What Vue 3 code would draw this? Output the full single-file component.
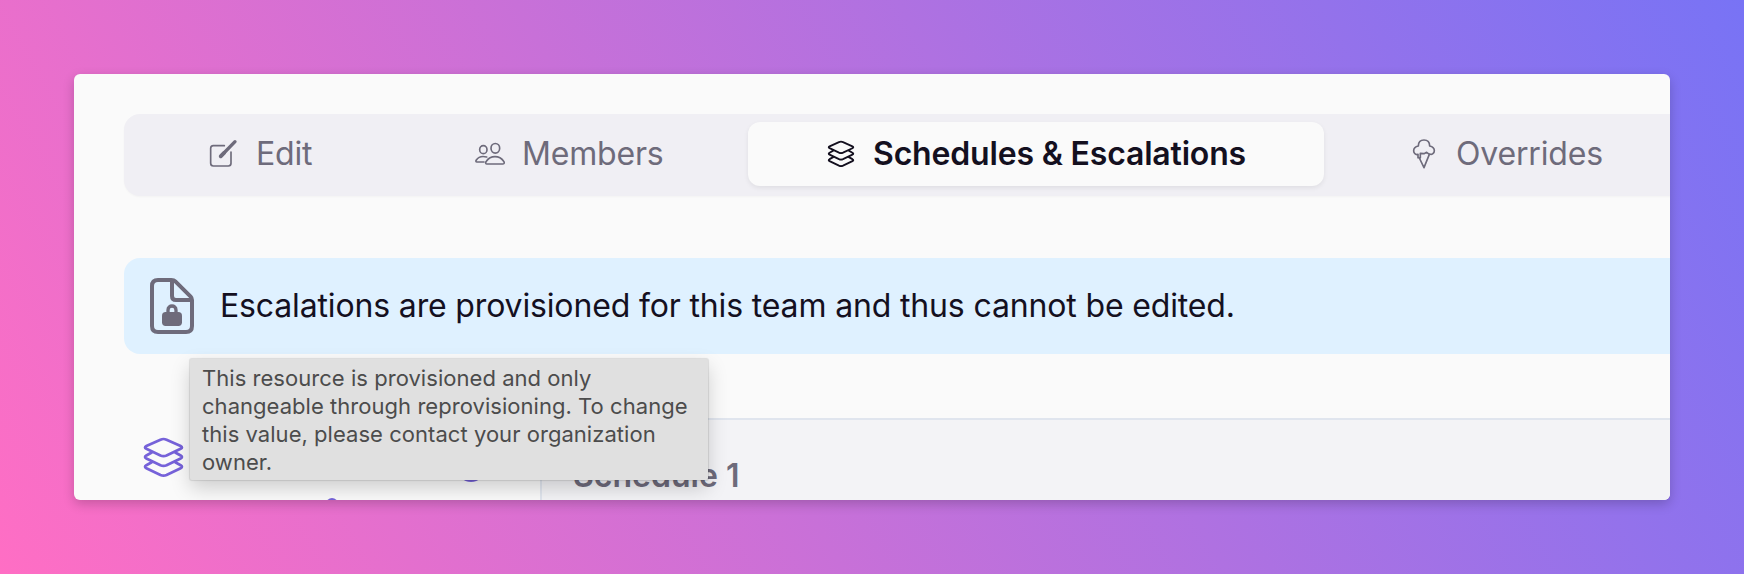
<script setup>
import { ref } from 'vue'

const tabs = [
    { id: 'edit', label: 'Edit' },
    { id: 'members', label: 'Members' },
    { id: 'schedules', label: 'Schedules & Escalations' },
    { id: 'overrides', label: 'Overrides' },
]

const activeTab = ref('schedules')
</script>

<template>
    <div class="backdrop">
        <main class="window">
            <nav class="tabs">
                <button
                    v-for="tab in tabs"
                    :key="tab.id"
                    class="tab"
                    :class="[tab.id, { active: tab.id === activeTab }]"
                    @click="activeTab = tab.id"
                >
                    <svg v-if="tab.id === 'edit'" class="tab-icon" viewBox="27 24 96 96">
                        <path d="M76 47H43Q35 47 35 55V100Q35 108 43 108H88Q96 108 96 100V66" />
                        <path d="M66 78L108 35" stroke-width="10" />
                        <path d="M65 79L76 68" stroke-width="11" />
                    </svg>
                    <svg v-else-if="tab.id === 'members'" class="tab-icon" viewBox="102 114 96 96">
                        <ellipse cx="166" cy="145" rx="13" ry="14.5" />
                        <ellipse cx="130" cy="149" rx="11" ry="12" />
                        <path d="M140 192C136 192 136 187 139 184C145 175 154 170 165 170C176 170 185 175 191 184C194 188 193 192 189 192Z" />
                        <path d="M132 186H111C107 186 107 183 109 180C115 171 125 167 140 171" />
                    </svg>
                    <svg v-else-if="tab.id === 'schedules'" class="tab-icon" viewBox="-13.5 -13.5 143 143">
                        <path d="M7 24L49 5Q58 1 67 5L109 24Q117 28 109 32L67 52Q58 56 49 52L7 32Q-1 28 7 24Z" stroke-width="8" />
                        <path d="M23 43L7 52Q-1 57 7 61L49 81Q58 85 67 81L109 61Q117 57 109 52L93 43" stroke-width="8" />
                        <path d="M23 72L7 81Q-1 86 7 90L49 110Q58 114 67 110L109 90Q117 86 109 81L93 72" stroke-width="8" />
                    </svg>
                    <svg v-else class="tab-icon" viewBox="39 24 96 96">
                        <path d="M72 83H69V73C60 76 56 67 56 62C56 55 61 50 70 48C70 37 76 30 87 30C98 30 104 37 104 48C113 50 118 55 118 62C118 69 111 75 104 72" />
                        <path d="M76 83V70L87 71L95 67L103 73L87 113L73 84" />
                    </svg>
                    <span>{{ tab.label }}</span>
                </button>
            </nav>

            <section class="notice">
                <svg class="lock-icon" viewBox="0 0 132 168">
                    <path d="M64 6H24Q6 6 6 24V144Q6 162 24 162H108Q126 162 126 144V66Q126 60 122 56L76 10Q72 6 64 6Z" />
                    <path d="M66 7V54Q66 66 78 66H125" />
                    <path d="M54 108V96C54 80 78 80 78 96V108" stroke-width="10" />
                    <rect class="lock-body" x="36" y="102" width="60" height="42" rx="11" />
                </svg>
                <span class="notice-text">Escalations are provisioned for this team and thus cannot be edited.</span>
                <div class="tooltip" role="tooltip">
                    This resource is provisioned and only<br>
                    changeable through reprovisioning. To change<br>
                    this value, please contact your organization<br>
                    owner.
                </div>
            </section>

            <section class="content">
                <aside class="sidebar">
                    <svg class="layers-icon" viewBox="0 0 116 116">
                        <path d="M7 24L49 5Q58 1 67 5L109 24Q117 28 109 32L67 52Q58 56 49 52L7 32Q-1 28 7 24Z" />
                        <path d="M23 43L7 52Q-1 57 7 61L49 81Q58 85 67 81L109 61Q117 57 109 52L93 43" />
                        <path d="M23 72L7 81Q-1 86 7 90L49 110Q58 114 67 110L109 90Q117 86 109 81L93 72" />
                    </svg>
                    <span class="add-dot"></span>
                    <span class="node-dot"></span>
                </aside>
                <div class="schedule">
                    <h2>Schedule 1</h2>
                </div>
            </section>
        </main>
    </div>
</template>

<style>
body {
    margin: 0;
    overflow: hidden;
}
</style>

<style scoped>
    .backdrop {
        box-sizing: border-box;
        width: 1744px;
        height: 574px;
        padding: 74px;
        background: linear-gradient(60deg, #ff6ec4, #7873f5);
        font-family: Inter, "Liberation Sans", sans-serif;
    }
    .window {
        box-sizing: border-box;
        height: 426px;
        padding: 40px 0 0 50px;
        overflow: hidden;
        border-radius: 6px;
        background: #fafafa;
        box-shadow: 0 4px 12px rgba(0, 0, 0, 0.2);
    }
    .tabs {
        display: flex;
        gap: 8px;
        box-sizing: border-box;
        width: 1640px;
        height: 82px;
        padding: 8px 8px 8px 7px;
        border-radius: 16px;
        background: #f0eff4;
        box-shadow: 0 1px 2px rgba(0, 0, 0, 0.03);
    }
    .tab {
        display: flex;
        flex: none;
        align-items: center;
        box-sizing: border-box;
        height: 64px;
        padding: 0 0 0 77px;
        gap: 16px;
        border: none;
        border-radius: 12px;
        background: transparent;
        color: #6e6b7b;
        font: 400 32px/40px Inter, "Liberation Sans", sans-serif;
        letter-spacing: -0.18px;
        white-space: nowrap;
        cursor: pointer;
    }
    .edit {
        width: 259px;
    }
    .members {
        width: 342px;
        padding-left: 76px;
    }
    .schedules {
        width: 576px;
    }
    .overrides {
        width: 360px;
        padding-left: 76px;
    }
    .tab.active {
        background: #fafafa;
        color: #14101f;
        font-weight: 600;
        box-shadow: 0 2px 5px rgba(0, 0, 0, 0.07);
    }
    .tab-icon {
        flex: none;
        width: 32px;
        height: 32px;
        fill: none;
        stroke: currentColor;
        stroke-width: 5;
        stroke-linecap: round;
        stroke-linejoin: round;
    }
    .notice {
        position: relative;
        display: flex;
        align-items: center;
        box-sizing: border-box;
        height: 96px;
        margin-top: 62px;
        padding-left: 26px;
        gap: 26px;
        border-radius: 16px 0 0 16px;
        background: #dff1ff;
    }
    .lock-icon {
        flex: none;
        width: 44px;
        height: 56px;
        fill: none;
        stroke: #6e6b7b;
        stroke-width: 12;
        stroke-linejoin: round;
    }
    .lock-body {
        fill: #6e6b7b;
        stroke: none;
    }
    .notice-text {
        color: #14101f;
        font-size: 32px;
        line-height: 40px;
        letter-spacing: -0.15px;
        white-space: nowrap;
    }
    .tooltip {
        position: absolute;
        z-index: 2;
        top: 101px;
        left: 66px;
        box-sizing: border-box;
        width: 518px;
        height: 121px;
        padding: 5px 0 0 12px;
        border-radius: 2px;
        background: #e0e0e0;
        box-shadow: 0 0 1px 1px rgba(0, 0, 0, 0.1), 0 8px 20px rgba(0, 0, 0, 0.18);
        color: #4c4c4c;
        font-size: 22px;
        line-height: 28px;
        letter-spacing: 0.04px;
        white-space: nowrap;
    }
    .content {
        display: flex;
        height: 82px;
        margin-top: 64px;
    }
    .sidebar {
        position: relative;
        flex: none;
        width: 416px;
    }
    .layers-icon {
        width: 39px;
        height: 39px;
        margin: 20px 0 0 20px;
        overflow: visible;
        fill: none;
        stroke: #7662d9;
        stroke-width: 8;
        stroke-linecap: round;
        stroke-linejoin: round;
    }
    /* timeline controls that peek out below the tooltip */
    .add-dot,
    .node-dot {
        position: absolute;
        border-radius: 50%;
        background: #7662d9;
    }
    .add-dot {
        top: 36px;
        left: 333px;
        width: 28px;
        height: 28px;
    }
    .node-dot {
        top: 80px;
        left: 202px;
        width: 12px;
        height: 12px;
    }
    .schedule {
        flex: 1;
        padding: 36px 0 0 31px;
        border-top: 2px solid #e0e5ee;
        border-left: 2px solid #e0e5ee;
        background: #f3f3f6;
    }
    .schedule h2 {
        margin: 0;
        color: #6e6b7b;
        font-size: 32px;
        font-weight: 600;
        line-height: 40px;
    }
</style>
